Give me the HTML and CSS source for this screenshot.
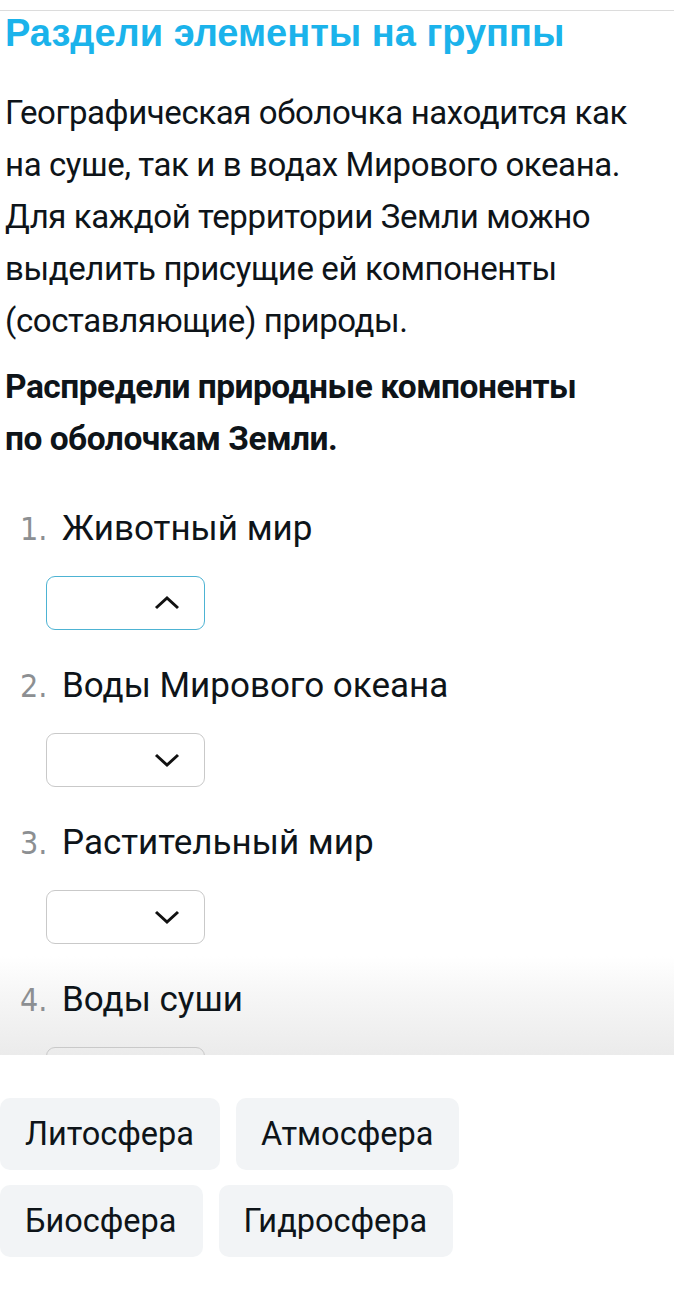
FILE: index.html
```html
<!DOCTYPE html>
<html lang="ru">
<head>
<meta charset="utf-8">
<title>Раздели элементы на группы</title>
<link rel="stylesheet" href="styles.css">
</head>
<body>
<div class="topline"></div>
<main class="viewport">
  <h1 class="title">Раздели элементы на группы</h1>
  <p class="lead">Географическая оболочка находится как на суше, так и в водах Мирового океана. Для каждой территории Земли можно выделить присущие ей компоненты (составляющие) природы.</p>
  <p class="task">Распредели природные компоненты по оболочкам Земли.</p>
  <ol class="items">
    <li class="item">
      <div class="item-label"><span class="num">1.</span><span class="name">Животный мир</span></div>
      <div class="select open">
        <svg class="caret" width="26" height="16" viewBox="0 0 26 16"><path d="M2 13 L13 3 L24 13" fill="none" stroke="#111" stroke-width="3"/></svg>
      </div>
    </li>
    <li class="item">
      <div class="item-label"><span class="num">2.</span><span class="name">Воды Мирового океана</span></div>
      <div class="select">
        <svg class="caret" width="26" height="16" viewBox="0 0 26 16"><path d="M2 3 L13 13 L24 3" fill="none" stroke="#111" stroke-width="3"/></svg>
      </div>
    </li>
    <li class="item">
      <div class="item-label"><span class="num">3.</span><span class="name">Растительный мир</span></div>
      <div class="select">
        <svg class="caret" width="26" height="16" viewBox="0 0 26 16"><path d="M2 3 L13 13 L24 3" fill="none" stroke="#111" stroke-width="3"/></svg>
      </div>
    </li>
    <li class="item">
      <div class="item-label"><span class="num">4.</span><span class="name">Воды суши</span></div>
      <div class="select">
        <svg class="caret" width="26" height="16" viewBox="0 0 26 16"><path d="M2 3 L13 13 L24 3" fill="none" stroke="#111" stroke-width="3"/></svg>
      </div>
    </li>
  </ol>
</main>
<section class="panel">
  <div class="chip-row">
    <span class="chip">Литосфера</span>
    <span class="chip">Атмосфера</span>
  </div>
  <div class="chip-row">
    <span class="chip">Биосфера</span>
    <span class="chip">Гидросфера</span>
  </div>
</section>
</body>
</html>
```

FILE: styles.css
```css
html, body {
  margin: 0;
  padding: 0;
  background: #fff;
}
body {
  width: 674px;
  height: 1297px;
  overflow: hidden;
  color: #0e1419;
  font-family: "Liberation Sans", Arial, sans-serif;
}
.topline {
  margin-top: 10px;
  height: 1px;
  background: #dcdcdc;
}
.viewport {
  height: 1044px;
  overflow: hidden;
  background: linear-gradient(to bottom, #fff 0, #fff 945px, #f6f6f6 985px, #ebebeb 1044px);
}
.title {
  margin: 0 0 0 5px;
  font-family: "Liberation Sans", Arial, sans-serif;
  font-weight: 700;
  font-size: 38px;
  line-height: 44px;
  color: #1bb3eb;
}
.lead, .task {
  margin: 0 0 0 5px;
  font-family: Roboto, "Liberation Sans", sans-serif;
  font-size: 33px;
  line-height: 52px;
  letter-spacing: -0.4px;
  width: 650px;
}
.lead {
  margin-top: 32px;
}
.task {
  margin-top: 14px;
  font-weight: 700;
  font-size: 33.5px;
  letter-spacing: -0.5px;
  width: 590px;
}
.items {
  list-style: none;
  margin: 42px 0 0 0;
  padding: 0;
  display: flex;
  flex-direction: column;
  gap: 34px;
}
.item {
  display: flex;
  flex-direction: column;
  gap: 25px;
}
.item-label {
  display: flex;
  align-items: baseline;
  padding-left: 20px;
  line-height: 44px;
}
.num {
  width: 42px;
  font-family: "DejaVu Sans Condensed", "Liberation Sans", sans-serif;
  font-size: 32px;
  color: #8c8f92;
}
.name {
  font-family: Roboto, "Liberation Sans", sans-serif;
  font-size: 35px;
  color: #0e1419;
}
.select {
  margin-left: 46px;
  width: 133px;
  height: 52px;
  padding-right: 24px;
  border: 1px solid #c9c9c9;
  border-radius: 9px;
  display: flex;
  align-items: center;
  justify-content: flex-end;
  box-sizing: content-box;
}
.select.open {
  border-color: #4db3d3;
}
.caret {
  display: block;
}
.panel {
  background: #fff;
  padding-top: 43px;
  display: flex;
  flex-direction: column;
  gap: 15px;
}
.chip-row {
  display: flex;
  gap: 16px;
}
.chip {
  display: flex;
  align-items: center;
  height: 72px;
  padding: 0 26px 0 25px;
  background: #f2f4f6;
  border-radius: 10px;
  font-family: Roboto, "Liberation Sans", sans-serif;
  font-size: 32.5px;
  color: #0e1419;
}
```
